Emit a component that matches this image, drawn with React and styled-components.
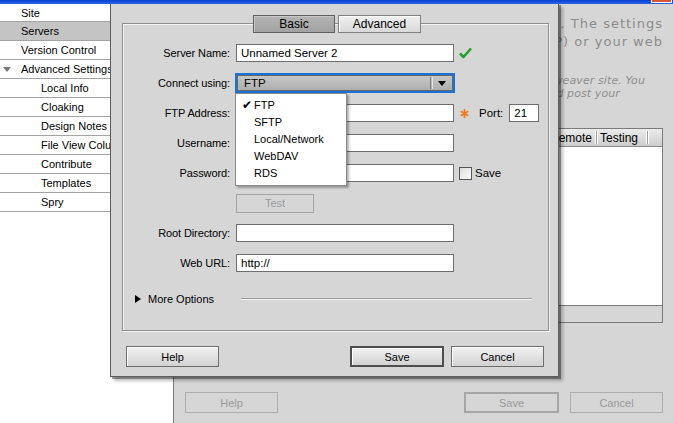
import React from 'react'
import styled, { createGlobalStyle } from 'styled-components'

const GlobalStyle = createGlobalStyle`
  html, body {
    margin: 0;
    padding: 0;
    background: #d6d6d6;
  }
  * { box-sizing: border-box; }
`

const Screen = styled.div`
  position: relative;
  width: 673px;
  height: 423px;
  overflow: hidden;
  background: #d6d6d6;
  font-family: "Liberation Sans", Arial, sans-serif;
  font-size: 11px;
  color: #000;
`

const TitleStrip = styled.div`
  position: relative;
  z-index: 5;
  height: 4px;
  background: linear-gradient(#0a3fd0, #2a64ea);
  display: flex;
  justify-content: flex-end;
`

const CloseBit = styled.div`
  width: 21px;
  height: 3px;
  margin-right: 1px;
  background: #d8553a;
  border-left: 1px solid #fff;
  border-right: 1px solid #fff;
  border-bottom: 1px solid #fff;
`

const Body = styled.div`
  display: flex;
  height: 419px;
`

const Sidebar = styled.ul`
  width: 174px;
  margin: 0;
  padding: 0;
  list-style: none;
  background: #fff;
  border-right: 1px solid #7c7c7c;
`

const SideItem = styled.li`
  height: 19px;
  display: flex;
  align-items: center;
  padding-left: ${p => (p.$indent ? 41 : 21)}px;
  position: relative;
  white-space: nowrap;
  background: ${p => (p.$selected ? '#c4c4c4' : '#fff')};
  border-bottom: 1px solid #a3a3a3;
  &:first-child { height: 18px; }
`

const Twisty = styled.span`
  position: absolute;
  left: 3px;
  top: 7px;
  width: 0;
  height: 0;
  border-left: 4px solid transparent;
  border-right: 4px solid transparent;
  border-top: 5px solid #7a7a7a;
`

const MainPanel = styled.div`
  flex: 1;
  display: flex;
  flex-direction: column;
  padding: 11px 10px 0 11px;
`

const Intro = styled.div`
  font-family: "DejaVu Sans", sans-serif;
  font-size: 13px;
  letter-spacing: 1px;
  line-height: 18px;
  color: #8c8c8c;
  text-align: right;
  white-space: nowrap;
`

const Note = styled.div`
  margin-top: 23px;
  font-family: "DejaVu Sans", sans-serif;
  font-style: italic;
  font-size: 11px;
  letter-spacing: 0.1px;
  line-height: 13px;
  color: #8f8f8f;
  white-space: nowrap;
`

const NoteLine = styled.div`
  text-align: right;
  padding-right: ${p => p.$right}px;
`

const ServerTable = styled.div`
  margin-top: 28px;
  height: 195px;
  border: 1px solid #7a7a7a;
  display: flex;
  flex-direction: column;
`

const TableHead = styled.div`
  height: 18px;
  display: flex;
  justify-content: flex-end;
  background: linear-gradient(#ececec, #cdcdcd);
  border-bottom: 1px solid #8a8a8a;
`

const HeadCell = styled.div`
  width: ${p => p.$w}px;
  display: flex;
  align-items: center;
  padding-left: 3px;
  border-right: 1px solid #9a9a9a;
  box-shadow: inset -1px 0 0 #fff, 1px 0 0 #fff;
  margin: 2px 0;
  font-size: 12px;
`

const HeadFill = styled.div`
  width: 14px;
`

const TableBody = styled.div`
  flex: 1;
  background: #fff;
  border-bottom: 1px solid #7a7a7a;
`

const TableFoot = styled.div`
  height: 16px;
  background: #d6d6d6;
`

const FooterBar = styled.div`
  margin-top: 69px;
  display: flex;
  align-items: center;
`

const GhostButton = styled.div`
  width: ${p => p.$w || 93}px;
  height: 21px;
  display: flex;
  align-items: center;
  justify-content: center;
  color: #9a9a9a;
  border: ${p => (p.$default ? '2px solid #a6a6a6' : '1px solid #adadad')};
  margin-left: ${p => p.$gap || 0}px;
`

const Spacer = styled.div`
  flex: 1;
`

/* modal dialog over the page */
const Dialog = styled.div`
  position: absolute;
  z-index: 3;
  left: 110px;
  top: 3px;
  width: 449px;
  height: 374px;
  background: #d6d6d6;
  border: 1px solid #5c5c5c;
  box-shadow: 2px 2px 0 rgba(0, 0, 0, 0.35), 4px 4px 3px rgba(0, 0, 0, 0.25);
  display: flex;
  flex-direction: column;
`

const GroupBox = styled.div`
  width: 427px;
  height: 308px;
  margin: 19px 0 0 11px;
  border: 1px solid #8e8e8e;
  box-shadow: inset 1px 1px 0 #f4f4f4, 1px 1px 0 #f4f4f4;
  display: flex;
  flex-direction: column;
`

const Tabs = styled.div`
  display: flex;
  justify-content: center;
  gap: 3px;
  margin-top: -9px;
  padding-left: 3px;
`

const Tab = styled.div`
  width: ${p => p.$w}px;
  height: 18px;
  display: flex;
  align-items: center;
  justify-content: center;
  font-size: 12px;
  border: 1px solid ${p => (p.$active ? '#5f5f5f' : '#808080')};
  background: ${p =>
    p.$active ? 'linear-gradient(#b4b4b4, #a2a2a2)' : 'linear-gradient(#f0f0f0, #d8d8d8)'};
  box-shadow: inset 1px 1px 0 ${p => (p.$active ? '#c8c8c8' : '#fff')};
`

const Form = styled.div`
  margin-top: 5px;
  display: flex;
  flex-direction: column;
`

const FormRow = styled.div`
  height: 30px;
  display: flex;
  align-items: center;
`

const Label = styled.div`
  width: 107px;
  margin-right: 6px;
  text-align: right;
  white-space: nowrap;
  letter-spacing: -0.1px;
`

const TextBox = styled.div`
  width: ${p => p.$w || 218}px;
  height: 18px;
  background: #fff;
  border: 1px solid #6e6e6e;
  display: flex;
  align-items: center;
  padding-left: 4px;
  margin-left: ${p => p.$gap || 0}px;
  font-size: 11.5px;
`

const SelectWrap = styled.div`
  position: relative;
  margin-left: -1px;
`

const SelectBox = styled.div`
  width: 220px;
  height: 20px;
  border: 2px solid #1a72d6;
  display: flex;
  align-items: center;
`

const SelectFace = styled.div`
  flex: 1;
  height: 100%;
  border: 1px solid #666;
  background: linear-gradient(#c6c6c6, #aeaeae);
  display: flex;
  align-items: center;
  padding-left: 6px;
  font-size: 11.5px;
`

const SelectValue = styled.div`
  flex: 1;
`

const SelectDivider = styled.div`
  width: 3px;
  height: 12px;
  border-left: 1px solid #7c7c7c;
  border-right: 1px solid #e2e2e2;
  margin-right: 5px;
`

const SelectArrow = styled.div`
  width: 0;
  height: 0;
  margin-right: 6px;
  border-left: 4px solid transparent;
  border-right: 4px solid transparent;
  border-top: 5px solid #000;
`

const Menu = styled.ul`
  position: absolute;
  z-index: 4;
  top: 20px;
  left: 0;
  width: 112px;
  margin: 0;
  padding: 2px 0 4px;
  list-style: none;
  background: #fff;
  border: 1px solid #8a8a8a;
  box-shadow: 2px 2px 2px rgba(0, 0, 0, 0.3);
`

const MenuItem = styled.li`
  position: relative;
  height: 17px;
  display: flex;
  align-items: center;
  padding-left: 18px;
  white-space: nowrap;
`

const CheckMark = styled.span`
  position: absolute;
  left: 6px;
  top: 2px;
  font-size: 12px;
  font-family: "DejaVu Sans", sans-serif;
`

const Hint = styled.div`
  margin-left: ${p => p.$gap || 4}px;
  display: flex;
  align-items: center;
`

const CheckBox = styled.div`
  width: 13px;
  height: 13px;
  margin-left: 5px;
  border: 1px solid #555;
  background: linear-gradient(135deg, #dcdcdc, #fff);
`

const InlineLabel = styled.span`
  margin-left: ${p => p.$gap || 3}px;
  font-size: 11.5px;
`

const PushButton = styled.div`
  width: ${p => p.$w || 93}px;
  height: ${p => p.$h || 21}px;
  display: flex;
  align-items: center;
  justify-content: center;
  color: ${p => (p.$disabled ? '#9a9a9a' : '#000')};
  border: ${p =>
    p.$default ? '2px solid #4e4e4e' : p.$disabled ? '1px solid #a4a4a4' : '1px solid #6e6e6e'};
  background: ${p =>
    p.$disabled ? '#d6d6d6' : 'linear-gradient(#f2f2f2, #d2d2d2)'};
  box-shadow: ${p => (p.$disabled ? 'none' : 'inset 1px 1px 0 #fff')};
  margin-left: ${p => p.$gap || 0}px;
`

const MoreRow = styled.div`
  margin-top: 12px;
  height: 18px;
  display: flex;
  align-items: center;
  padding-left: 12px;
`

const Expander = styled.span`
  width: 0;
  height: 0;
  border-top: 4px solid transparent;
  border-bottom: 4px solid transparent;
  border-left: 6px solid #000;
  margin-right: 7px;
`

const Rule = styled.div`
  width: 291px;
  height: 2px;
  margin-left: 27px;
  border-top: 1px solid #9c9c9c;
  border-bottom: 1px solid #f2f2f2;
`

const DialogButtons = styled.div`
  margin-top: 15px;
  padding: 0 14px 0 15px;
  display: flex;
  align-items: center;
`

const GreenCheck = () => (
  <svg width="13" height="12" viewBox="0 0 13 12">
    <path d="M1 6.5 L4.5 10 L12 1.5" fill="none" stroke="#22a02a" strokeWidth="2.6" strokeLinejoin="round" />
  </svg>
)

const Asterisk = () => (
  <svg width="9" height="9" viewBox="0 0 9 9">
    <g stroke="#ee7a1e" strokeWidth="1.8" strokeLinecap="round">
      <line x1="4.5" y1="0.8" x2="4.5" y2="8.2" />
      <line x1="1.3" y1="2.6" x2="7.7" y2="6.4" />
      <line x1="1.3" y1="6.4" x2="7.7" y2="2.6" />
    </g>
  </svg>
)

const sideItems = [
  { name: 'Site' },
  { name: 'Servers', selected: true },
  { name: 'Version Control' },
  { name: 'Advanced Settings', twisty: true },
  { name: 'Local Info', indent: true },
  { name: 'Cloaking', indent: true },
  { name: 'Design Notes', indent: true },
  { name: 'File View Columns', indent: true },
  { name: 'Contribute', indent: true },
  { name: 'Templates', indent: true },
  { name: 'Spry', indent: true },
]

const protocols = ['FTP', 'SFTP', 'Local/Network', 'WebDAV', 'RDS']

export default function App() {
  return (
    <Screen>
      <GlobalStyle />
      <TitleStrip>
        <CloseBit />
      </TitleStrip>

      <Body>
        <Sidebar>
          {sideItems.map(item => (
            <SideItem key={item.name} $indent={item.indent} $selected={item.selected}>
              {item.twisty && <Twisty />}
              {item.name}
            </SideItem>
          ))}
        </Sidebar>

        <MainPanel>
          <Intro>
            <div>pages on the web. The settings</div>
            <div>Provider (ISP) or your web</div>
          </Intro>
          <Note>
            <NoteLine $right={18}>working on your Dreamweaver site. You</NoteLine>
            <NoteLine $right={43}>to connect to the web and post your</NoteLine>
          </Note>

          <ServerTable>
            <TableHead>
              <HeadCell $w={50}>Remote</HeadCell>
              <HeadCell $w={51}>Testing</HeadCell>
              <HeadFill />
            </TableHead>
            <TableBody />
            <TableFoot />
          </ServerTable>

          <FooterBar>
            <GhostButton>Help</GhostButton>
            <Spacer />
            <GhostButton $default $w={95}>Save</GhostButton>
            <GhostButton $gap={11}>Cancel</GhostButton>
          </FooterBar>
        </MainPanel>
      </Body>

      <Dialog>
        <GroupBox>
          <Tabs>
            <Tab $active $w={82}>Basic</Tab>
            <Tab $w={83}>Advanced</Tab>
          </Tabs>

          <Form>
            <FormRow>
              <Label>Server Name:</Label>
              <TextBox>Unnamed Server 2</TextBox>
              <Hint $gap={5}><GreenCheck /></Hint>
            </FormRow>

            <FormRow>
              <Label>Connect using:</Label>
              <SelectWrap>
                <SelectBox>
                  <SelectFace>
                    <SelectValue>FTP</SelectValue>
                    <SelectDivider />
                    <SelectArrow />
                  </SelectFace>
                </SelectBox>
                <Menu>
                  {protocols.map((p, i) => (
                    <MenuItem key={p}>
                      {i === 0 && <CheckMark>✔</CheckMark>}
                      {p}
                    </MenuItem>
                  ))}
                </Menu>
              </SelectWrap>
            </FormRow>

            <FormRow>
              <Label>FTP Address:</Label>
              <TextBox />
              <Hint $gap={6}><Asterisk /></Hint>
              <InlineLabel $gap={10}>Port:</InlineLabel>
              <TextBox $w={30} $gap={6}>21</TextBox>
            </FormRow>

            <FormRow>
              <Label>Username:</Label>
              <TextBox />
            </FormRow>

            <FormRow>
              <Label>Password:</Label>
              <TextBox />
              <CheckBox />
              <InlineLabel>Save</InlineLabel>
            </FormRow>

            <FormRow>
              <Label />
              <PushButton $disabled $w={78} $h={19}>Test</PushButton>
            </FormRow>

            <FormRow>
              <Label>Root Directory:</Label>
              <TextBox />
            </FormRow>

            <FormRow>
              <Label>Web URL:</Label>
              <TextBox>http://</TextBox>
            </FormRow>
          </Form>

          <MoreRow>
            <Expander />
            More Options
            <Rule />
          </MoreRow>
        </GroupBox>

        <DialogButtons>
          <PushButton>Help</PushButton>
          <Spacer />
          <PushButton $default $w={94}>Save</PushButton>
          <PushButton $gap={7}>Cancel</PushButton>
        </DialogButtons>
      </Dialog>
    </Screen>
  )
}
